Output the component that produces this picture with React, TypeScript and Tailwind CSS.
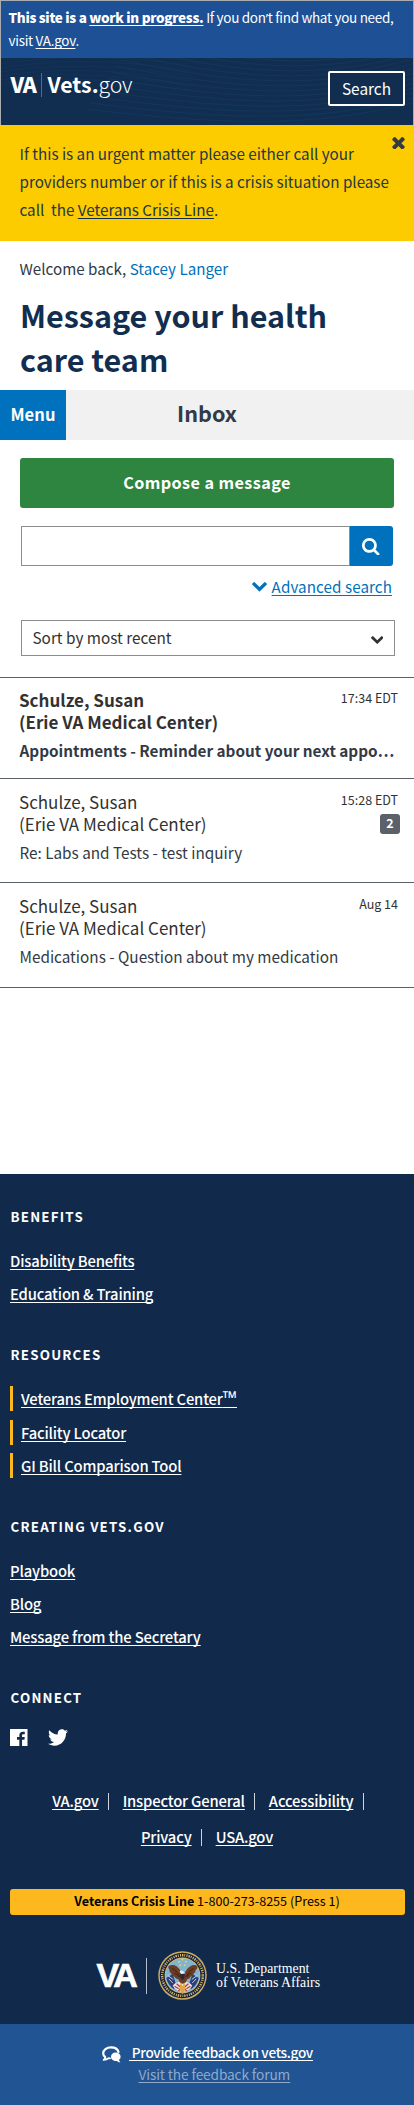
import React from "react";

const FONT = "font-['Noto_Sans_CJK_SC',sans-serif]";
const LINK = "underline decoration-1 underline-offset-2 [text-decoration-skip-ink:none]";

function Chevron({ className }: { className: string }) {
  return (
    <svg viewBox="90 533 1612 1035" preserveAspectRatio="none" fill="currentColor" className={className} aria-hidden="true">
      <path d="M1683 808l-742 741q-19 19-45 19t-45-19l-742-741q-19-19-19-45.5t19-45.5l166-165q19-19 45-19t45 19l531 531 531-531q19-19 45-19t45 19l166 165q19 19 19 45.5t-19 45.5z" />
    </svg>
  );
}

function CloseIcon() {
  return (
    <svg viewBox="302 366 1188 1188" fill="currentColor" className="h-[12.5px] w-[13px]" aria-hidden="true">
      <path d="M1490 1322q0 40-28 68l-136 136q-28 28-68 28t-68-28l-294-294-294 294q-28 28-68 28t-68-28l-136-136q-28-28-28-68t28-68l294-294-294-294q-28-28-28-68t28-68l136-136q28-28 68-28t68 28l294 294 294-294q28-28 68-28t68 28l136 136q28 28 28 68t-28 68l-294 294 294 294q28 28 28 68z" />
    </svg>
  );
}

function SearchIcon() {
  return (
    <svg viewBox="64 128 1664 1664" fill="currentColor" className="h-[17.5px] w-[17.5px]" aria-hidden="true">
      <path d="M1216 832q0-185-131.5-316.5t-316.5-131.5-316.5 131.5-131.5 316.5 131.5 316.5 316.5 131.5 316.5-131.5 131.5-316.5zm512 832q0 52-38 90t-90 38q-54 0-90-38l-343-342q-179 124-399 124-143 0-273.5-55.5t-225-150-150-225-55.5-273.5 55.5-273.5 150-225 225-150 273.5-55.5 273.5 55.5 225 150 150 225 55.5 273.5q0 220-124 399l343 343q37 37 37 90z" />
    </svg>
  );
}

const WAVES = Array.from({ length: 17 }, (_, i) => i);

function Waves() {
  return (
    <svg viewBox="0 0 412 67" className="absolute inset-0 h-full w-full" fill="none" stroke="#1b4f7f" strokeWidth="0.7" opacity="0.35" aria-hidden="true">
      {WAVES.map((i) => (
        <path key={i} d={`M${150 - i * 4} ${-48 + i * 6.2} C 240 ${-14 + i * 5.2}, 320 ${-6 + i * 4.6}, 414 ${-34 + i * 4.9}`} />
      ))}
      {WAVES.slice(0, 6).map((i) => (
        <path key={"l" + i} d={`M0 ${6 + i * 4} C 60 ${-4 + i * 4}, 130 ${-2 + i * 5}, 190 ${8 + i * 5}`} opacity="0.6" />
      ))}
    </svg>
  );
}

function Seal() {
  return (
    <svg viewBox="0 0 100 100" className="h-[49px] w-[49px]" aria-hidden="true">
      <circle cx="50" cy="50" r="49.5" fill="#c9ae63" />
      <circle cx="50" cy="50" r="46.5" fill="#17203f" />
      <circle cx="50" cy="50" r="41.5" fill="none" stroke="#cdb56c" strokeWidth="5" strokeDasharray="2.2 2 3 1.9 1.8 2.6" />
      <circle cx="50" cy="50" r="36.5" fill="#d6bd72" />
      <circle cx="50" cy="50" r="34.8" fill="#7fb4d3" />
      <path d="M17 55 L30 47 L36 66 L33 78 A35 35 0 0 1 17 55Z M83 55 L70 47 L64 66 L67 78 A35 35 0 0 0 83 55Z" fill="#2b3f78" />
      <path d="M22 57l8 8M20 50l11 8M78 57l-8 8M80 50l-11 8" stroke="#dfe4ee" strokeWidth="1.8" />
      <path d="M30 71q9-11 20-6q11-5 20 6q-7 11-20 13q-13-2-20-13z" fill="#e9e2e2" />
      <path d="M34 72l8 5M38 67l8 7M66 72l-8 5M62 67l-8 7M42 82l3-5M58 82l-3-5" stroke="#bb3340" strokeWidth="2.6" />
      <path d="M21 31q9-5 17 0q7 5 11 15q3-2 5 0q5-11 12-15q8-5 15 0q-1 6-4 8q0 5-4 7q-1 5-6 6q-2 5-8 6q-1 7-8 9q-7-1-9-9q-6-1-9-6q-5-1-6-6q-4-2-4-8q-2-2-2-7z" fill="#6d3d22" />
      <path d="M28 35q10 4 17 18M73 35q-9 4-16 18M33 45q6 2 10 8M68 45q-6 2-9 8" stroke="#3a2018" strokeWidth="1.8" fill="none" />
      <path d="M45 47q5-5 10 1l-2 9q-4 3-7-1z" fill="#2c2536" />
      <path d="M44 42q4-4 8 0l3 4l-8 1z" fill="#f0efe8" />
      <path d="M46 64l4 8 4-8 2 14-6 10-6-10z" fill="#e0a640" />
      <g fill="#e9d15c">
        <circle cx="50" cy="17.5" r="2" />
        <circle cx="43" cy="22" r="2" />
        <circle cx="57" cy="22" r="2" />
        <circle cx="45.5" cy="29" r="2" />
        <circle cx="54.5" cy="29" r="2" />
      </g>
    </svg>
  );
}

function FacebookIcon() {
  return (
    <svg viewBox="0 0 18 18" className="h-[17.5px] w-[17.5px]" fill="currentColor" aria-hidden="true">
      <path d="M0 0H18V18H12.4V11.1H14.8L15.2 8.3H12.4V6.6C12.4 5.8 12.7 5.3 13.8 5.3H15.2V2.8C15 2.8 14.1 2.7 13.2 2.7C11 2.7 9.6 4 9.6 6.3V8.3H7.2V11.1H9.6V18H0Z" />
    </svg>
  );
}

function TwitterIcon() {
  return (
    <svg viewBox="0 2 24 20" className="h-[17px] w-[20px]" fill="currentColor" aria-hidden="true">
      <path d="M23.954 4.569c-.885.389-1.83.654-2.825.775 1.014-.611 1.794-1.574 2.163-2.723-.951.555-2.005.959-3.127 1.184-.896-.959-2.173-1.559-3.591-1.559-2.717 0-4.92 2.203-4.92 4.917 0 .39.045.765.127 1.124C7.691 8.094 4.066 6.13 1.64 3.161c-.427.722-.666 1.561-.666 2.475 0 1.71.87 3.213 2.188 4.096-.807-.026-1.566-.248-2.228-.616v.061c0 2.385 1.693 4.374 3.946 4.827-.413.111-.849.171-1.296.171-.314 0-.615-.03-.916-.086.631 1.953 2.445 3.377 4.604 3.417-1.68 1.319-3.809 2.105-6.102 2.105-.39 0-.779-.023-1.17-.067 2.189 1.394 4.768 2.209 7.557 2.209 9.054 0 13.999-7.496 13.999-13.986 0-.209 0-.42-.015-.63.961-.689 1.8-1.56 2.46-2.548l-.047-.02z" />
    </svg>
  );
}

function CommentsIcon() {
  return (
    <svg viewBox="0 0 19 16.5" className="h-[16.5px] w-[19px]" aria-hidden="true">
      <path d="M3.2 11.2C1.8 10.1 1.2 8.7 1.2 7.2C1.2 3.9 4.6 1.3 8.9 1.3C13 1.3 15.8 3.3 16.5 5.9" fill="none" stroke="#fff" strokeWidth="2.2" strokeLinecap="round" />
      <path d="M3.2 10.6C3.6 12 2.6 13.2 1.6 13.9C4 13.8 5.6 13 6.6 12.1L8 12.3" fill="none" stroke="#fff" strokeWidth="1.8" strokeLinejoin="round" strokeLinecap="round" />
      <path d="M13.7 6.6C16.6 6.6 18.6 8.5 18.6 10.7C18.6 12.1 18 13 17 13.8C17.1 14.9 17.7 15.5 18.5 16.2C16.9 16.3 15.7 15.7 14.9 14.9C11.5 15.2 9 13.4 9 10.7C9 8.5 11 6.6 13.7 6.6Z" fill="#fff" />
    </svg>
  );
}

type Message = { time: string; subject: string; unread?: boolean; count?: number; size: string };

const messages: Message[] = [
  { time: "17:34 EDT", subject: "Appointments - Reminder about your next appo…", unread: true, size: "h-[101px] pt-[10.5px]" },
  { time: "15:28 EDT", subject: "Re: Labs and Tests - test inquiry", count: 2, size: "h-[104px] pt-[11.5px]" },
  { time: "Aug 14", subject: "Medications - Question about my medication", size: "h-[106px] border-b pt-[12px]" },
];

function MessageRow({ m }: { m: Message }) {
  const weight = m.unread ? "font-bold" : "font-normal";
  return (
    <li className={"flex flex-col border-t border-[#5b616b] pl-[19px] " + m.size}>
      <div className="flex justify-between pr-[14px]">
        <div className={"whitespace-nowrap text-[17px] leading-[22px] text-[#323232] " + weight}>
          <div>Schulze, Susan</div>
          <div>(Erie VA Medical Center)</div>
        </div>
        <div className="flex flex-col items-end">
          <time className="mr-[2px] text-[12.5px] leading-[18px] text-[#323232]">{m.time}</time>
          {m.count && (
            <span className="mt-[5px] h-5 w-5 rounded-[3px] bg-[#5b616b] text-center text-[12.5px] leading-[18px] font-bold text-white">
              {m.count}
            </span>
          )}
        </div>
      </div>
      <div className={"mt-[6px] ml-[0.5px] text-[15.3px] leading-[22px] whitespace-nowrap text-[#323a45] " + weight}>{m.subject}</div>
    </li>
  );
}

function FooterSection({ title, links, marked }: { title: string; links: React.ReactNode[]; marked?: boolean }) {
  return (
    <section className="mb-[38.8px]">
      <FooterTitle>{title}</FooterTitle>
      <ul className="mt-[21.2px] flex flex-col gap-[8.2px]">
        {links.map((l, i) => (
          <li
            key={i}
            className={
              "text-[14.8px] leading-[25px] font-medium tracking-[-0.17px] " +
              (marked ? "h-[25px] border-l-[3.5px] border-[#fdb81e] pl-[8.5px]" : "pl-[0.5px]")
            }
          >
            <a href="#" className={LINK}>{l}</a>
          </li>
        ))}
      </ul>
    </section>
  );
}

function FooterTitle({ children }: { children: React.ReactNode }) {
  return <h3 className="pl-px text-[13.3px] leading-5 font-bold tracking-[1.22px]">{children}</h3>;
}

function LinkRow({ links, trailing }: { links: string[]; trailing?: boolean }) {
  return (
    <div className="flex h-[36.3px] items-center justify-center text-[14.8px] leading-[36px] font-medium tracking-[-0.17px]">
      {links.map((l, i) => (
        <React.Fragment key={l}>
          <a href="#" className={LINK}>{l}</a>
          {(i < links.length - 1 || trailing) && <span className="mr-[13.5px] ml-[9.5px] h-[17px] w-px bg-white/80 last:mr-[-2px]" />}
        </React.Fragment>
      ))}
    </div>
  );
}

export default function App() {
  return (
    <div className={"w-[414px] bg-white text-[#323a45] " + FONT}>
      <header className="h-[125px] border-x border-t border-[#a9adb0] bg-[#112e51] text-white">
        <div className="h-[57px] bg-[#1d5095] pt-[6.25px] pl-[7.5px] text-[13.5px] leading-[21.5px] tracking-[-0.3px] whitespace-nowrap">
          <div>
            <strong className="font-black tracking-[-0.31px]">
              This site is a <a href="#" className={LINK}>work in progress.</a>
            </strong>{" "}
            If you don<span className="font-['Open_Sans']">’</span>t find what you need,
          </div>
          <div>
            visit <a href="#" className={LINK}>VA.gov</a>.
          </div>
        </div>
        <div className="relative h-[67px] overflow-hidden">
          <Waves />
          <div className="relative flex items-start justify-between pr-2 pl-[9.5px]">
            <div className="mt-[12px] flex items-center text-[21.3px] leading-[24px]">
              <span className="w-[26px] font-black tracking-[-1px]">VA</span>
              <span className="mt-[3px] mr-[6px] ml-[4px] h-[24px] w-px bg-[#4f6a8a]" />
              <span className="font-bold">Vets.</span>
              <span className="font-light tracking-[-0.2px]">gov</span>
            </div>
            <button className="mt-[13px] h-[35px] w-[77px] rounded-[2px] border-2 border-white bg-[#112e51] text-[15.4px] leading-[29px]">Search</button>
          </div>
        </div>
      </header>

      <div className="flex h-[116px] justify-between bg-[#fccb00] pt-[14px] pl-[19.5px] text-[#233746]">
        <p className="text-[15.2px] leading-7 whitespace-nowrap">
          If this is an urgent matter please either call your
          <br />
          providers number or if this is a crisis situation please
          <br />
          call&nbsp; the <a href="#" className={LINK + " decoration-[#112e51]"}>Veterans Crisis Line</a>.
        </p>
        <button aria-label="Close" className="mt-[-3px] mr-[9px] h-[14px] text-[#323a45]">
          <CloseIcon />
        </button>
      </div>

      <main className="h-[933px]">
        <p className="pt-[13px] pl-[19.5px] text-[15.2px] leading-7">
          Welcome back, <a href="#" className="text-[#0071bc]">Stacey Langer</a>
        </p>
        <h1 className="mt-[11px] pl-5 text-[30.5px] leading-[44px] font-bold text-[#112e51]">
          Message your health
          <br />
          care team
        </h1>
        <div className="mt-[9px] grid h-[50px] grid-cols-[66px_282px_66px] bg-[#f1f1f1]">
          <button className="bg-[#0071bc] pb-[3px] text-[16.5px] leading-[46px] font-bold tracking-[0.1px] text-white">Menu</button>
          <h2 className="text-center text-[21.6px] leading-[45px] font-bold">Inbox</h2>
        </div>

        <div className="px-5 pt-[18px]">
          <button className="block h-[50px] w-full rounded-[3px] bg-[#2e8540] pb-[2px] text-[16.2px] leading-[48px] font-bold tracking-[0.42px] text-white">
            Compose a message
          </button>
          <form className="mt-[18px] ml-px flex h-10">
            <input className="h-10 w-[329px] border border-[#8d8d8d] bg-white" />
            <button type="button" aria-label="Search messages" className="flex w-[43px] items-center justify-center rounded-r-[3px] bg-[#0071bc] pt-[1px] pr-[1px] text-white">
              <SearchIcon />
            </button>
          </form>
          <div className="mt-[8px] flex items-center justify-end pr-[2px] text-[#0071bc]">
            <Chevron className="mt-[2px] mr-[5px] h-[9.5px] w-[15px]" />
            <a href="#" className={"text-[15.2px] leading-6 tracking-[0.08px] " + LINK}>Advanced search</a>
          </div>
          <div className="mt-[22px] mr-[-1px] ml-px flex h-9 items-center justify-between border border-[#8d8d8d] pr-[11px] pl-[10.5px] text-[#323232]">
            <span className="pb-[2px] text-[15.3px] leading-6">Sort by most recent</span>
            <Chevron className="mt-[3px] h-[8px] w-[12.5px]" />
          </div>
        </div>

        <ul className="mt-[21px]">
          {messages.map((m) => (
            <MessageRow key={m.time} m={m} />
          ))}
        </ul>
      </main>

      <footer className="bg-[#11294b] text-white">
        <div className="h-[850px] px-[9.5px] pt-[33px]">
          <FooterSection title="BENEFITS" links={["Disability Benefits", "Education & Training"]} />
          <FooterSection
            title="RESOURCES"
            marked
            links={[
              <>
                Veterans Employment Center<span className="font-['Open_Sans'] text-[19px] leading-none">™</span>
              </>,
              "Facility Locator",
              "GI Bill Comparison Tool",
            ]}
          />
          <FooterSection title="CREATING VETS.GOV" links={["Playbook", "Blog", "Message from the Secretary"]} />
          <FooterTitle>CONNECT</FooterTitle>
          <div className="mt-[21px] flex h-[17.5px] items-center gap-[20.5px] pl-[0.5px]">
            <FacebookIcon />
            <TwitterIcon />
          </div>
          <nav className="mt-[36.5px]">
            <LinkRow links={["VA.gov", "Inspector General", "Accessibility"]} trailing />
            <LinkRow links={["Privacy", "USA.gov"]} />
          </nav>
          <div className="mt-[34px] h-[26px] rounded-[3px] bg-[#fdb81e] text-center text-[12.6px] leading-[23px] text-black">
            <strong className="font-bold">Veterans Crisis Line</strong> 1-800-273-8255 (Press 1)
          </div>
          <div className="mt-[36px] ml-[87px] flex h-[49px] items-center">
            <span className="w-[40px] font-['Liberation_Sans',sans-serif] text-[34px] leading-[49px] font-bold tracking-[-3.5px] [-webkit-text-stroke:0.7px_white]">VA</span>
            <span className="mr-[11px] ml-[9px] h-9 w-px bg-[#b4bdc9]" />
            <Seal />
            <div className="ml-[9.5px] font-['Liberation_Serif',serif] text-[13.8px] leading-[14.3px] tracking-[0.02px] whitespace-nowrap">
              U.S. Department
              <br />
              of Veterans Affairs
            </div>
          </div>
        </div>
        <div className="h-[81px] bg-[#205493] pt-[22px]">
          <div className="flex h-[22px] pl-[101.5px]">
            <CommentsIcon />
            <a href="#" className={"mt-[-4px] ml-[8.5px] text-[13.6px] leading-[21px] font-medium tracking-[-0.3px] whitespace-pre " + LINK}>
              {" Provide feedback on vets.gov"}
            </a>
          </div>
          <a href="#" className={"mt-[-5px] ml-[138.5px] block text-[13.7px] leading-[22px] tracking-[-0.12px] text-[#90a9c9] " + LINK}>
            Visit the feedback forum
          </a>
        </div>
      </footer>
    </div>
  );
}
